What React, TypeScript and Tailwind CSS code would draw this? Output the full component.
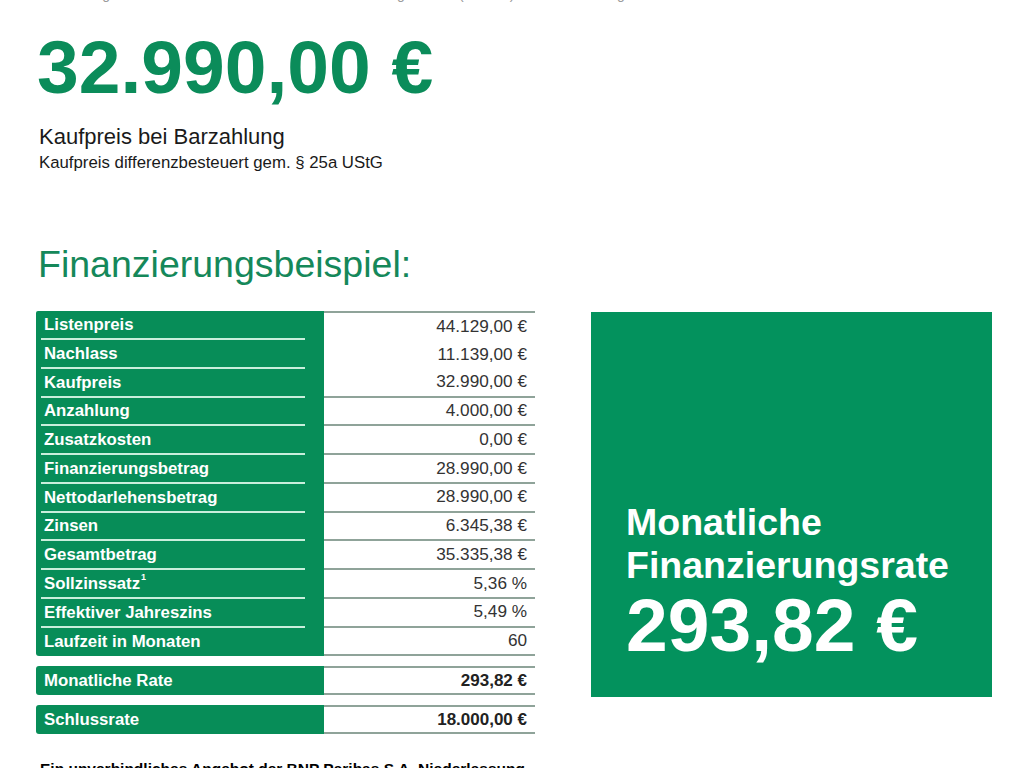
import React from "react";

const rows: { label: string; value: string; sup?: boolean }[] = [
  { label: "Listenpreis", value: "44.129,00 €" },
  { label: "Nachlass", value: "11.139,00 €" },
  { label: "Kaufpreis", value: "32.990,00 €" },
  { label: "Anzahlung", value: "4.000,00 €" },
  { label: "Zusatzkosten", value: "0,00 €" },
  { label: "Finanzierungsbetrag", value: "28.990,00 €" },
  { label: "Nettodarlehensbetrag", value: "28.990,00 €" },
  { label: "Zinsen", value: "6.345,38 €" },
  { label: "Gesamtbetrag", value: "35.335,38 €" },
  { label: "Sollzinssatz", value: "5,36 %", sup: true },
  { label: "Effektiver Jahreszins", value: "5,49 %" },
  { label: "Laufzeit in Monaten", value: "60" },
];

export default function App() {
  return (
    <div
      className="w-[1024px] h-[768px] overflow-hidden bg-white text-[#222]"
      style={{ fontFamily: '"Liberation Sans", Arial, sans-serif' }}
    >
      {/* clipped line at top */}
      <div className="h-[3px] overflow-hidden pl-[22px]">
        <p className="-mt-[13px] text-[14px] leading-[15px] text-[#999] whitespace-nowrap">
          Erstzulassung 03/2019 · Kilometerstand 45.000 km · Leistung 110 kW (150 PS) · Diesel · Schaltgetriebe
        </p>
      </div>

      <div className="pl-[36px]">
        <div className="mt-[27px] pl-[1px] text-[75px] font-bold leading-none text-[#0b8c5a]">
          32.990,00 €
        </div>
        <div className="mt-[21px] pl-[3px] text-[22px] leading-none text-[#1a1a1a]">
          Kaufpreis bei Barzahlung
        </div>
        <div className="mt-[7px] pl-[3px] text-[16.8px] leading-none text-[#1a1a1a]">
          Kaufpreis differenzbesteuert gem. § 25a UStG
        </div>
        <div className="mt-[74px] pl-[2px] text-[37.5px] leading-none text-[#15885a]">
          Finanzierungsbeispiel:
        </div>

        <div className="mt-[28px] flex items-start">
          {/* table */}
          <div className="w-[499px]">
            <div>
              {rows.map((r, i) => (
                <div key={r.label} className="flex h-[28.75px]">
                  <div
                    className={`w-[288px] bg-[#078d58] ${
                      i === rows.length - 1 ? "rounded-bl-[3px]" : ""
                    } ${i === 0 ? "rounded-tl-[2px]" : ""}`}
                  >
                    <div
                      className={`ml-[5px] mr-[19px] h-full flex items-center pl-[3px] text-[16.8px] font-bold text-white ${
                        i < rows.length - 1 ? "border-b-2 border-[#c9eedc]" : ""
                      }`}
                    >
                      {r.label}
                      {r.sup && (
                        <sup className="text-[9px] -top-[6px] ml-[1px]">1</sup>
                      )}
                    </div>
                  </div>
                  <div
                    className={`flex-1 flex items-center justify-end pr-[8px] text-[17.2px] text-[#333] border-[#8fa399] ${
                      i === 0 ? "border-t-2" : ""
                    } ${i >= 2 ? "border-b-2" : ""}`}
                  >
                    {r.value}
                  </div>
                </div>
              ))}
            </div>

            <div className="mt-[10px] flex h-[29px]">
              <div className="w-[288px] bg-[#078d58] rounded-l-[3px] flex items-center pl-[8px] text-[16.8px] font-bold text-white">
                Monatliche Rate
              </div>
              <div className="flex-1 flex items-center justify-end pr-[8px] text-[17px] font-bold text-[#222] border-y-2 border-[#8fa399]">
                293,82 €
              </div>
            </div>
            <div className="mt-[10px] flex h-[29px]">
              <div className="w-[288px] bg-[#078d58] rounded-l-[3px] flex items-center pl-[8px] text-[16.8px] font-bold text-white">
                Schlussrate
              </div>
              <div className="flex-1 flex items-center justify-end pr-[8px] text-[17px] font-bold text-[#222] border-y-2 border-[#8fa399]">
                18.000,00 €
              </div>
            </div>

            <div className="mt-[25px] pl-[4px] text-[15.5px] font-bold leading-[20px] text-black">
              Ein unverbindliches Angebot der BNP Paribas S.A. Niederlassung Deutschland, Schwanthalerstraße 31, 80336 München.
            </div>
          </div>

          {/* green box */}
          <div className="ml-[56px] mt-[1px] w-[401px] h-[385px] bg-[#03925d] flex flex-col justify-end pl-[35px] pb-[34px] text-white">
            <div className="text-[37.5px] font-bold leading-[43px]">
              Monatliche
              <br />
              Finanzierungsrate
            </div>
            <div className="mt-[1px] text-[75px] font-bold leading-none">
              293,82 €
            </div>
          </div>
        </div>
      </div>
    </div>
  );
}
